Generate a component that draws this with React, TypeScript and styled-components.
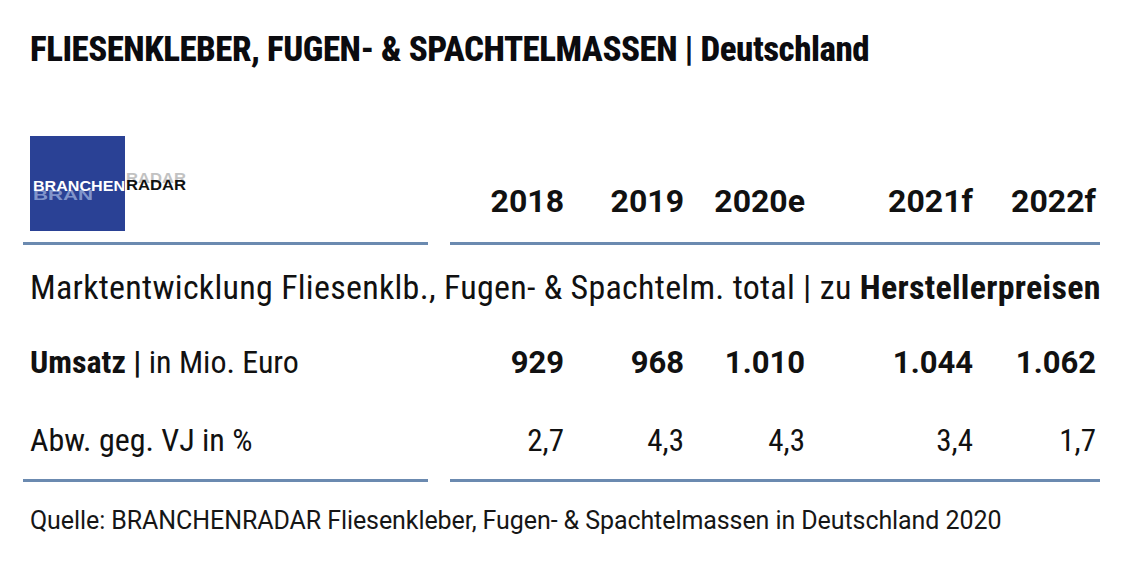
import React from "react";
import styled, { createGlobalStyle } from "styled-components";

const GlobalStyle = createGlobalStyle`
  html, body {
    margin: 0;
    padding: 0;
    background: #ffffff;
  }
  body {
    font-family: Roboto, "Open Sans", sans-serif;
    font-stretch: condensed;
    color: #111111;
  }
`;

const RULE = "#6b8ab0";

const Page = styled.div`
  width: 1136px;
  height: 566px;
  box-sizing: border-box;
  padding: 30px 0 0 23px;
  overflow: hidden;
`;

const Title = styled.h1`
  margin: 0 0 0 7px;
  font-size: 35px;
  line-height: 40px;
  font-weight: 800;
  letter-spacing: -0.5px;
  color: #0b0b0f;
  white-space: nowrap;
`;

const Table = styled.div`
  margin-top: 66px;
  width: 1077px;
  display: flex;
  flex-direction: column;
`;

const Row = styled.div<{ $height: number; $rule?: boolean }>`
  display: grid;
  grid-template-columns: 405px 650px;
  column-gap: 22px;
  height: ${(p) => p.$height}px;
  align-items: end;

  & > * {
    height: 100%;
    box-sizing: border-box;
    border-bottom: ${(p) => (p.$rule ? `3px solid ${RULE}` : "none")};
  }
`;

const LabelCell = styled.div`
  padding-left: 7px;
  display: flex;
  align-items: center;
  font-size: 32px;
  font-weight: 400;
  white-space: nowrap;
`;

const Values = styled.div<{ $bold?: boolean; $size: number; $stretch: number }>`
  display: grid;
  grid-template-columns: 114px 120px 121px 168px 123px;
  padding-right: 4px;
  align-items: center;
  font-size: ${(p) => p.$size}px;
  font-weight: ${(p) => (p.$bold ? 700 : 400)};
  font-stretch: ${(p) => p.$stretch}%;
  white-space: nowrap;
`;

const Value = styled.span`
  text-align: right;
`;

const LogoCell = styled.div`
  padding: 0 0 11px 7px;
  display: flex;
  align-items: flex-start;
`;

const YearValues = styled(Values)`
  align-items: end;
  padding-bottom: 22px;
`;

const FullLine = styled.div`
  height: 80px;
  box-sizing: border-box;
  padding: 24px 0 0 7px;
  line-height: 40px;
  font-size: 34px;
  letter-spacing: 0.28px;
  white-space: nowrap;
`;

const Strong = styled.b`
  font-weight: 700;
`;

const Source = styled.p`
  margin: 24px 0 0 7px;
  font-size: 25px;
  font-stretch: 91.8%;
  letter-spacing: -0.08px;
  white-space: nowrap;
  color: #161616;
`;

const Logo = () => (
  <svg width="165" height="95" viewBox="0 0 165 95">
    <rect x="0" y="0" width="95" height="95" fill="#2a4195" />
    <g fontFamily="'Liberation Sans', Arial, sans-serif" fontWeight="700" fontSize="15">
      <text x="3" y="60" fill="#9fb0dd" opacity="0.75" textLength="60" lengthAdjust="spacingAndGlyphs" transform="translate(0 4)">
        BRAN
      </text>
      <text x="96" y="47" fill="#9a9a9a" opacity="0.6" textLength="60" lengthAdjust="spacingAndGlyphs">
        RADAR
      </text>
      <text x="3" y="55" fill="#ffffff" textLength="92" lengthAdjust="spacingAndGlyphs">
        BRANCHEN
      </text>
      <text x="96" y="54" fill="#111111" textLength="60" lengthAdjust="spacingAndGlyphs">
        RADAR
      </text>
    </g>
  </svg>
);

const years = ["2018", "2019", "2020e", "2021f", "2022f"];
const umsatz = ["929", "968", "1.010", "1.044", "1.062"];
const change = ["2,7", "4,3", "4,3", "3,4", "1,7"];

export default function App() {
  return (
    <>
      <GlobalStyle />
      <Page>
        <Title>FLIESENKLEBER, FUGEN- &amp; SPACHTELMASSEN | Deutschland</Title>
        <Table>
          <Row $height={107} $rule>
            <LogoCell>
              <Logo />
            </LogoCell>
            <YearValues $bold $size={32} $stretch={90}>
              {years.map((y) => (
                <Value key={y}>{y}</Value>
              ))}
            </YearValues>
          </Row>
          <FullLine>
            Marktentwicklung Fliesenklb., Fugen- &amp; Spachtelm. total | zu&nbsp;
            <Strong>Herstellerpreisen</Strong>
          </FullLine>
          <Row $height={78}>
            <LabelCell>
              <Strong>Umsatz |</Strong>&nbsp;in Mio. Euro
            </LabelCell>
            <Values $bold $size={31} $stretch={88}>
              {umsatz.map((v, i) => (
                <Value key={i}>{v}</Value>
              ))}
            </Values>
          </Row>
          <Row $height={81} $rule>
            <LabelCell>Abw. geg. VJ in %</LabelCell>
            <Values $size={31} $stretch={82}>
              {change.map((v, i) => (
                <Value key={i}>{v}</Value>
              ))}
            </Values>
          </Row>
        </Table>
        <Source>
          Quelle: BRANCHENRADAR Fliesenkleber, Fugen- &amp; Spachtelmassen in Deutschland 2020
        </Source>
      </Page>
    </>
  );
}
